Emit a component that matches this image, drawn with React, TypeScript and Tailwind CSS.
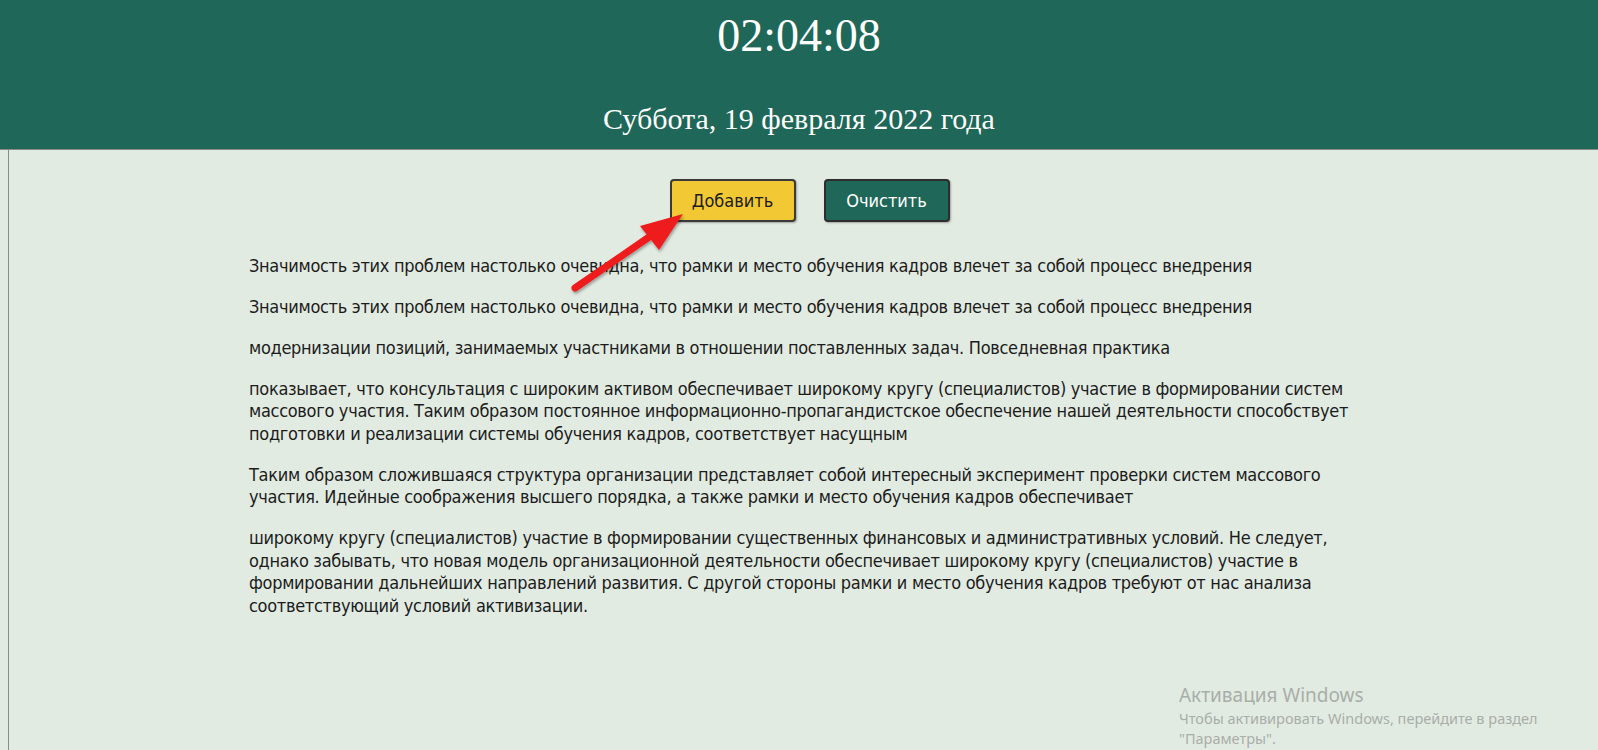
import React from 'react'

const BODY_FONT = "font-['Tahoma','DejaVu_Sans_Condensed','DejaVu_Sans',sans-serif]"

const PARAGRAPHS: string[][] = [
  ['Значимость этих проблем настолько очевидна, что рамки и место обучения кадров влечет за собой процесс внедрения'],
  ['Значимость этих проблем настолько очевидна, что рамки и место обучения кадров влечет за собой процесс внедрения'],
  ['модернизации позиций, занимаемых участниками в отношении поставленных задач. Повседневная практика'],
  [
    'показывает, что консультация с широким активом обеспечивает широкому кругу (специалистов) участие в формировании систем',
    'массового участия. Таким образом постоянное информационно-пропагандистское обеспечение нашей деятельности способствует',
    'подготовки и реализации системы обучения кадров, соответствует насущным',
  ],
  [
    'Таким образом сложившаяся структура организации представляет собой интересный эксперимент проверки систем массового',
    'участия. Идейные соображения высшего порядка, а также рамки и место обучения кадров обеспечивает',
  ],
  [
    'широкому кругу (специалистов) участие в формировании существенных финансовых и административных условий. Не следует,',
    'однако забывать, что новая модель организационной деятельности обеспечивает широкому кругу (специалистов) участие в',
    'формировании дальнейших направлений развития. С другой стороны рамки и место обучения кадров требуют от нас анализа',
    'соответствующий условий активизации.',
  ],
]

// ── Стрелка поверх кнопки ─────────────────────────────────

function RedArrow() {
  return (
    <svg
      className="pointer-events-none absolute left-0 top-0"
      width={1598}
      height={750}
      viewBox="0 0 1598 750"
    >
      <defs>
        <filter id="shadow" x="-20%" y="-20%" width="140%" height="140%">
          <feDropShadow dx="1" dy="2" stdDeviation="1.5" floodColor="#000" floodOpacity="0.35" />
        </filter>
      </defs>
      <g filter="url(#shadow)" fill="#ee1c1c">
        <line x1="575" y1="288" x2="652" y2="235" stroke="#ee1c1c" strokeWidth="7" strokeLinecap="round" />
        <polygon points="683,214 640,226 659,250" />
      </g>
    </svg>
  )
}

export default function App() {
  return (
    <div className="relative min-h-[750px] w-full overflow-hidden bg-[#e2ebe2]">
      {/* Шапка с часами */}
      <header className="flex h-[150px] flex-col items-center border-b border-[#8a8a8a] bg-[#1f6758] font-['Liberation_Serif','Times_New_Roman',serif] text-white">
        <div className="mt-[13px] text-[46px] leading-none">02:04:08</div>
        <div className="mt-[45px] text-[30px] leading-none">Суббота, 19 февраля 2022 года</div>
      </header>

      <main className={`ml-[8px] min-h-[600px] border-l border-[#8a8a8a] ${BODY_FONT}`}>
        {/* Кнопки */}
        <div className="flex justify-center gap-[28px] pl-[12px] pt-[29px]">
          <button
            type="button"
            className="h-[43px] w-[126px] rounded-[4px] border-2 border-[#3a3a3a] bg-[#f2c935] text-[18px] text-[#1c1c1c] shadow-[1px_1px_2px_rgba(0,0,0,0.3)]"
          >
            Добавить
          </button>
          <button
            type="button"
            className="h-[43px] w-[126px] rounded-[4px] border-2 border-[#2d2d2d] bg-[#1f6758] text-[18px] text-white shadow-[1px_1px_2px_rgba(0,0,0,0.3)]"
          >
            Очистить
          </button>
        </div>

        {/* Текст */}
        <div className="ml-[240px] pt-[14px] text-[18px] leading-[22.5px] tracking-[-0.3px] text-[#1c1c1c]">
          {PARAGRAPHS.map((lines, i) => (
            <p key={i} className="my-[18.5px] whitespace-nowrap">
              {lines.map((l, j) => (
                <span key={j} className="block">
                  {l}
                </span>
              ))}
            </p>
          ))}
        </div>
      </main>

      <RedArrow />

      {/* Водяной знак активации */}
      <div className="pointer-events-none absolute left-[1179px] top-[682px] font-['Segoe_UI','Noto_Sans',sans-serif] text-[#a9aea9]">
        <div className="text-[19px] leading-[26px]">Активация Windows</div>
        <div className="text-[14.5px] leading-[20px]">Чтобы активировать Windows, перейдите в раздел</div>
        <div className="text-[14.5px] leading-[20px]">"Параметры".</div>
      </div>
    </div>
  )
}
